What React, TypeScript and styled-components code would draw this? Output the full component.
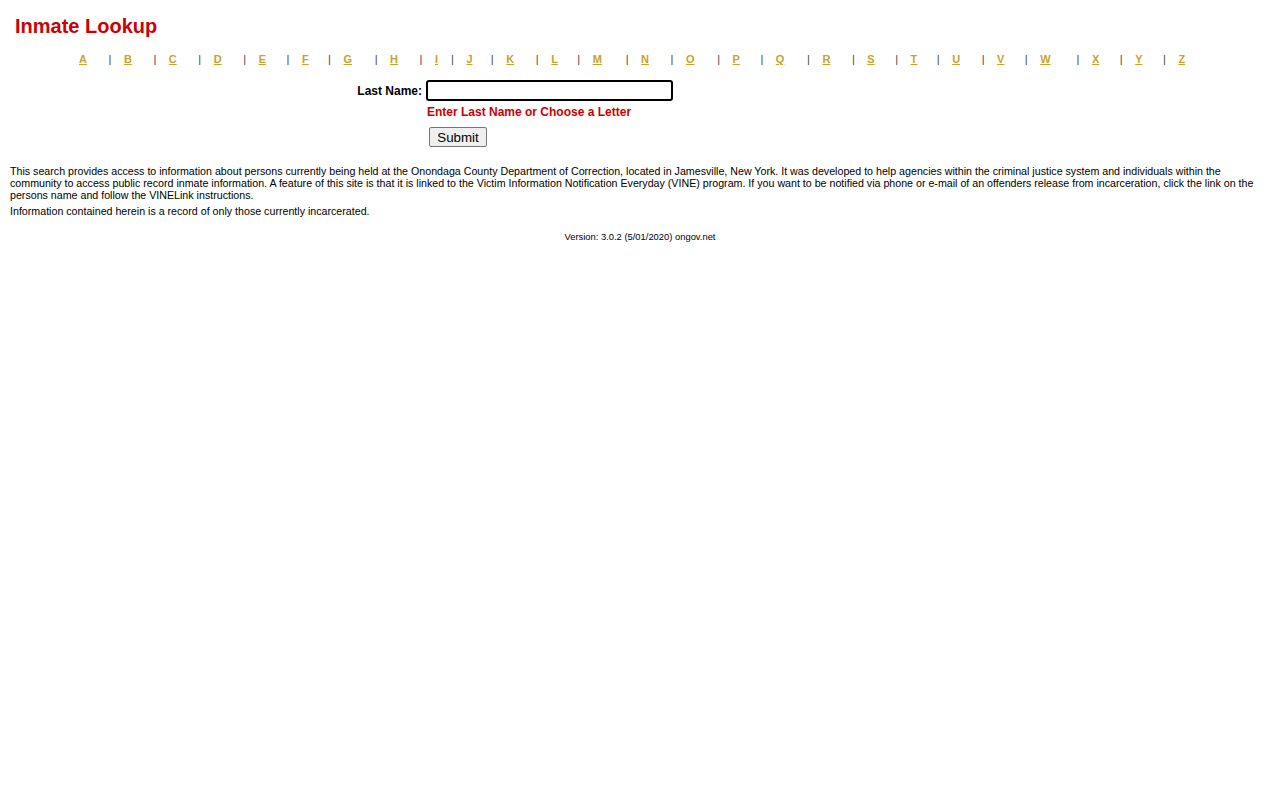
import React from 'react';
import styled, {createGlobalStyle} from "styled-components";

const GlobalStyle = createGlobalStyle`
  html, body {
    margin: 0;
    padding: 0;
    background: #ffffff;
    font-family: Arial, "Liberation Sans", sans-serif;
    color: #000000;
  }
`
const Page = styled.div`
  display: flex;
  flex-direction: column;
  padding: 0 10px;
`
const Title = styled.h1`
  margin: 15px 0 0 5px;

  font-size: 20px;
  font-weight: bold;
  line-height: 23px;
  color: #cc0000;
`
const LetterTable = styled.table`
  width: 1128px;
  margin: 12px auto 0 auto;
  border-spacing: 2px;

  td {
    padding: 1px;
    text-align: left;
    font-size: 11px;
    line-height: 13px;
  }
`
const LetterLink = styled.a`
  font-weight: bold;
  color: #c9a227;
  text-decoration: underline;
`
const Sep = styled.span`
  color: #444;
`
const Form = styled.form`
  display: grid;
  grid-template-columns: 412px auto;
  column-gap: 4px;
  row-gap: 4px;
  align-items: center;
  margin: 11px 0 0 0;
`
const Label = styled.label`
  justify-self: end;

  font-size: 12px;
  font-weight: bold;
`
const NameInput = styled.input`
  width: 247px;
  height: 21px;
  box-sizing: border-box;
  margin: 0;
  padding: 1px 2px;

  font-family: Arial, "Liberation Sans", sans-serif;
  font-size: 13px;

  border: 2px solid #000;
  border-radius: 3px;
  outline: none;
`
const ErrorText = styled.div`
  grid-column: 2;
  padding: 0 0 0 1px;

  font-size: 12px;
  font-weight: bold;
  color: #cc0000;
`
const SubmitButton = styled.button`
  grid-column: 2;
  justify-self: start;
  width: 58px;
  height: 20px;
  margin: 4px 0 0 3px;
  padding: 0 6px;

  font-family: Arial, "Liberation Sans", sans-serif;
  font-size: 13.33px;
  color: #000;

  background: #efefef;
  border: 1px solid #767676;
  border-radius: 2px;
`
const Info = styled.p`
  margin: 18px 0 0 0;

  font-size: 10.67px;
  line-height: 12px;

  & + & {
    margin: 4px 0 0 0;
  }
`
const Version = styled.div`
  margin: 14px 0 0 0;

  text-align: center;
  font-size: 9.4px;
`

const letters = 'ABCDEFGHIJKLMNOPQRSTUVWXYZ'.split('');

function App() {
  return (
    <>
      <GlobalStyle/>
      <Page>
        <Title>Inmate Lookup</Title>
        <LetterTable>
          <tbody>
            <tr>
              {letters.map((letter, i) => (
                <React.Fragment key={letter}>
                  <td><LetterLink href="#">{letter}</LetterLink></td>
                  {i < letters.length - 1 && <td><Sep>|</Sep></td>}
                </React.Fragment>
              ))}
            </tr>
          </tbody>
        </LetterTable>
        <Form onSubmit={(e) => e.preventDefault()}>
          <Label htmlFor="lastName">Last Name:</Label>
          <NameInput id="lastName" type="text"/>
          <ErrorText>Enter Last Name or Choose a Letter</ErrorText>
          <SubmitButton type="submit">Submit</SubmitButton>
        </Form>
        <Info>
          This search provides access to information about persons currently being held at the Onondaga County Department of Correction, located in Jamesville, New York. It was developed to help agencies within the criminal justice system and individuals within the community to access public record inmate information. A feature of this site is that it is linked to the Victim Information Notification Everyday (VINE) program. If you want to be notified via phone or e-mail of an offenders release from incarceration, click the link on the persons name and follow the VINELink instructions.
        </Info>
        <Info>Information contained herein is a record of only those currently incarcerated.</Info>
        <Version>Version: 3.0.2 (5/01/2020) ongov.net</Version>
      </Page>
    </>
  );
}

export default App;
